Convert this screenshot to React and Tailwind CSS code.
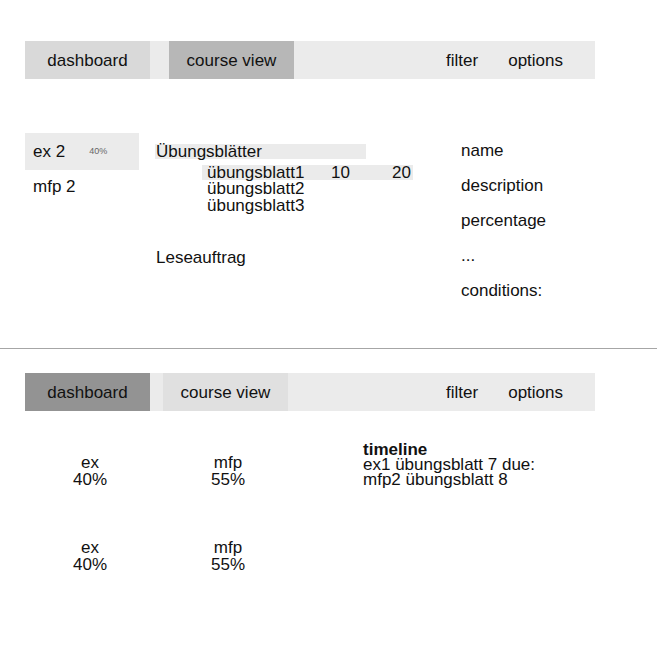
export default function App() {
  const font = { fontFamily: '"Liberation Sans", Arial, sans-serif' };
  return (
    <div className="w-[657px] h-[657px] bg-white text-[17px] text-[#111]" style={font}>
      <div className="pt-[41px] pl-[25px]">
        <nav className="flex items-center w-[570px] h-[38px] bg-[#ebebeb] leading-none">
          <div className="w-[125px] h-full bg-[#d9d9d9] flex items-center justify-center">dashboard</div>
          <div className="ml-[19px] w-[125px] h-full bg-[#b7b7b7] flex items-center justify-center">course view</div>
          <div className="ml-auto flex gap-[30px] pr-[32px]">
            <span>filter</span>
            <span>options</span>
          </div>
        </nav>

        <div className="mt-[54px] flex h-[176px]">
          <div className="w-[114px]">
            <div className="h-[37px] bg-[#ebebeb] flex items-center pl-[8px]">
              <span>ex 2</span>
              <span className="ml-[24px] text-[9px] text-[#666]">40%</span>
            </div>
            <div className="mt-[7px] pl-[8px] leading-[20px]">mfp 2</div>
          </div>
          <div className="ml-[16px] pt-[11px] w-[300px]">
            <div className="w-[211px] h-[15px] bg-[#ebebeb] leading-[15px] pl-[1px] whitespace-nowrap">Übungsblätter</div>
            <div className="mt-[6px] ml-[47px] w-[211px] h-[15px] bg-[#ebebeb] leading-[15px] pl-[5px] flex whitespace-nowrap">
              <span className="w-[124px]">übungsblatt1</span>
              <span className="w-[61px]">10</span>
              <span>20</span>
            </div>
            <div className="pl-[52px] leading-[17px]">
              <div>übungsblatt2</div>
              <div>übungsblatt3</div>
            </div>
            <div className="mt-[35px] pl-[1px] leading-[17px]">Leseauftrag</div>
          </div>
          <div className="ml-[5px] pl-[1px] leading-[35px]">
            <div>name</div>
            <div>description</div>
            <div>percentage</div>
            <div>...</div>
            <div>conditions:</div>
          </div>
        </div>
      </div>

      <div className="mt-[39px] h-px bg-[#a6a6a6] w-full" />

      <div className="pt-[24px] pl-[25px]">
        <nav className="flex items-center w-[570px] h-[38px] bg-[#ebebeb] leading-none">
          <div className="w-[125px] h-full bg-[#939393] flex items-center justify-center">dashboard</div>
          <div className="ml-[13px] w-[125px] h-full bg-[#e0e0e0] flex items-center justify-center">course view</div>
          <div className="ml-auto flex gap-[30px] pr-[32px]">
            <span>filter</span>
            <span>options</span>
          </div>
        </nav>

        <div className="mt-[43px] flex leading-[17px]">
          <div className="grid grid-cols-[130px_146px] gap-y-[51px] text-center">
            <div>
              <div>ex</div>
              <div>40%</div>
            </div>
            <div>
              <div>mfp</div>
              <div>55%</div>
            </div>
            <div>
              <div>ex</div>
              <div>40%</div>
            </div>
            <div>
              <div>mfp</div>
              <div>55%</div>
            </div>
          </div>
          <div className="ml-[62px] -mt-[12px] leading-[15px]">
            <div className="font-bold">timeline</div>
            <div>ex1 übungsblatt 7 due:</div>
            <div>mfp2 übungsblatt 8</div>
          </div>
        </div>
      </div>
    </div>
  );
}
